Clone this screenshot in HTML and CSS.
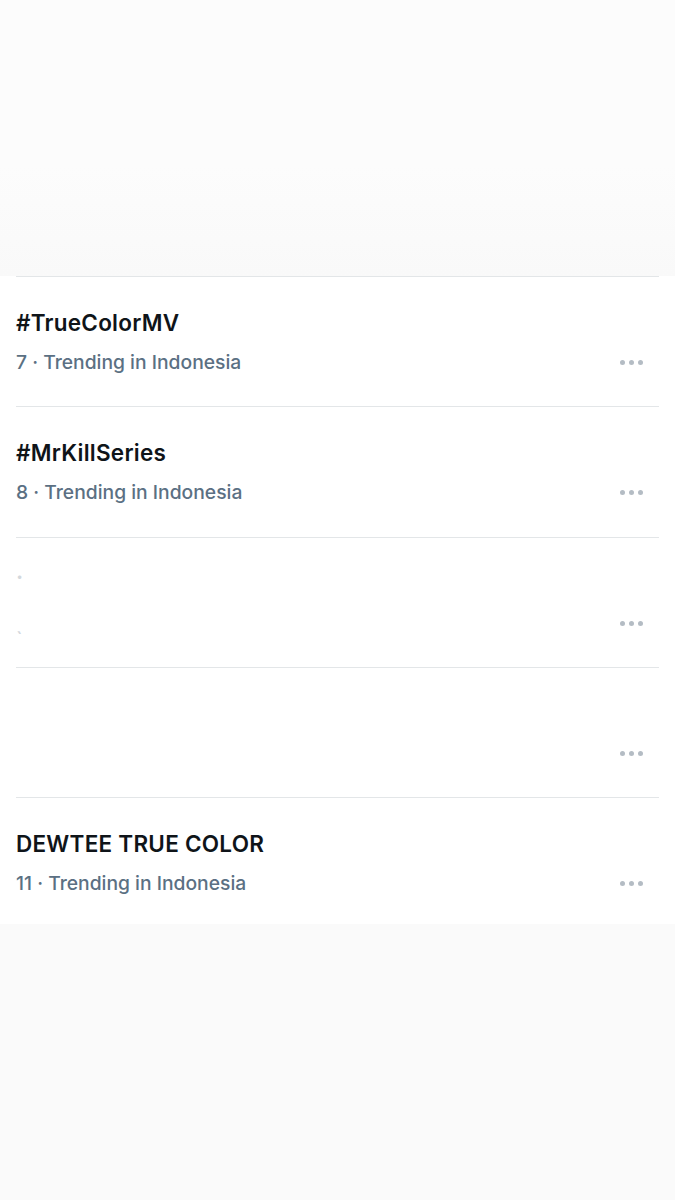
FILE: index.html
```html
<!DOCTYPE html>
<html lang="en">
<head>
<meta charset="utf-8">
<title>Trends</title>
<link rel="stylesheet" href="styles.css">
</head>
<body>
<div class="page">
  <div class="header-space"></div>
  <ul class="trends">
    <li class="trend">
      <div class="trend-text">
        <div class="trend-title">#TrueColorMV</div>
        <div class="trend-meta">7 · Trending in Indonesia</div>
      </div>
      <span class="more"><i></i><i></i><i></i></span>
    </li>
    <li class="trend">
      <div class="trend-text">
        <div class="trend-title">#MrKillSeries</div>
        <div class="trend-meta">8 · Trending in Indonesia</div>
      </div>
      <span class="more"><i></i><i></i><i></i></span>
    </li>
    <li class="trend">
      <div class="trend-text faded">
        <div class="trend-title"><span class="speck">·</span></div>
        <div class="trend-meta"><span class="speck low">`</span></div>
      </div>
      <span class="more"><i></i><i></i><i></i></span>
    </li>
    <li class="trend">
      <div class="trend-text">
        <div class="trend-title">&nbsp;</div>
        <div class="trend-meta">&nbsp;</div>
      </div>
      <span class="more"><i></i><i></i><i></i></span>
    </li>
    <li class="trend">
      <div class="trend-text">
        <div class="trend-title">DEWTEE TRUE COLOR</div>
        <div class="trend-meta">11 · Trending in Indonesia</div>
      </div>
      <span class="more"><i></i><i></i><i></i></span>
    </li>
  </ul>
  <div class="footer-space"></div>
</div>
</body>
</html>
```

FILE: styles.css
```css
* {
  box-sizing: border-box;
}

html, body {
  margin: 0;
  padding: 0;
  background: #fafafa;
}

body {
  font-family: Inter, "Noto Sans", "Liberation Sans", sans-serif;
  -webkit-font-smoothing: antialiased;
}

.page {
  display: flex;
  flex-direction: column;
  min-height: 1200px;
}

.header-space {
  height: 276px;
  background: linear-gradient(#fcfcfc 0%, #fcfcfc 60%, #f9f9f9 100%);
}

.trends {
  list-style: none;
  margin: 0;
  padding: 0 16px;
  background: #ffffff;
}

.trend {
  height: 130px;
  border-top: 1px solid #e3e6e8;
  display: flex;
  align-items: flex-start;
  justify-content: space-between;
  padding-top: 32px;
}

.trend:nth-child(2) {
  height: 131px;
}

.trend:last-child {
  height: 127px;
}

.trend-text {
  display: flex;
  flex-direction: column;
  gap: 13px;
}

.trend-title {
  font-size: 22.5px;
  line-height: 28px;
  font-weight: 600;
  color: #0f1419;
  letter-spacing: 0.25px;
}

.trend-meta {
  font-size: 19.3px;
  line-height: 24px;
  font-weight: 500;
  color: #5b7083;
}

.faded .trend-title,
.faded .trend-meta {
  color: #d3d8dc;
}

.speck {
  display: inline-block;
  transform: translateY(-7px);
}

.speck.low {
  transform: translateY(16px);
}

.more {
  display: flex;
  gap: 4px;
  margin-top: 51px;
  margin-right: 16px;
}

.more i {
  display: block;
  width: 5px;
  height: 5px;
  border-radius: 50%;
  background: #b4bcc4;
}

.footer-space {
  flex: 1;
  background: #fafafa;
}
```
